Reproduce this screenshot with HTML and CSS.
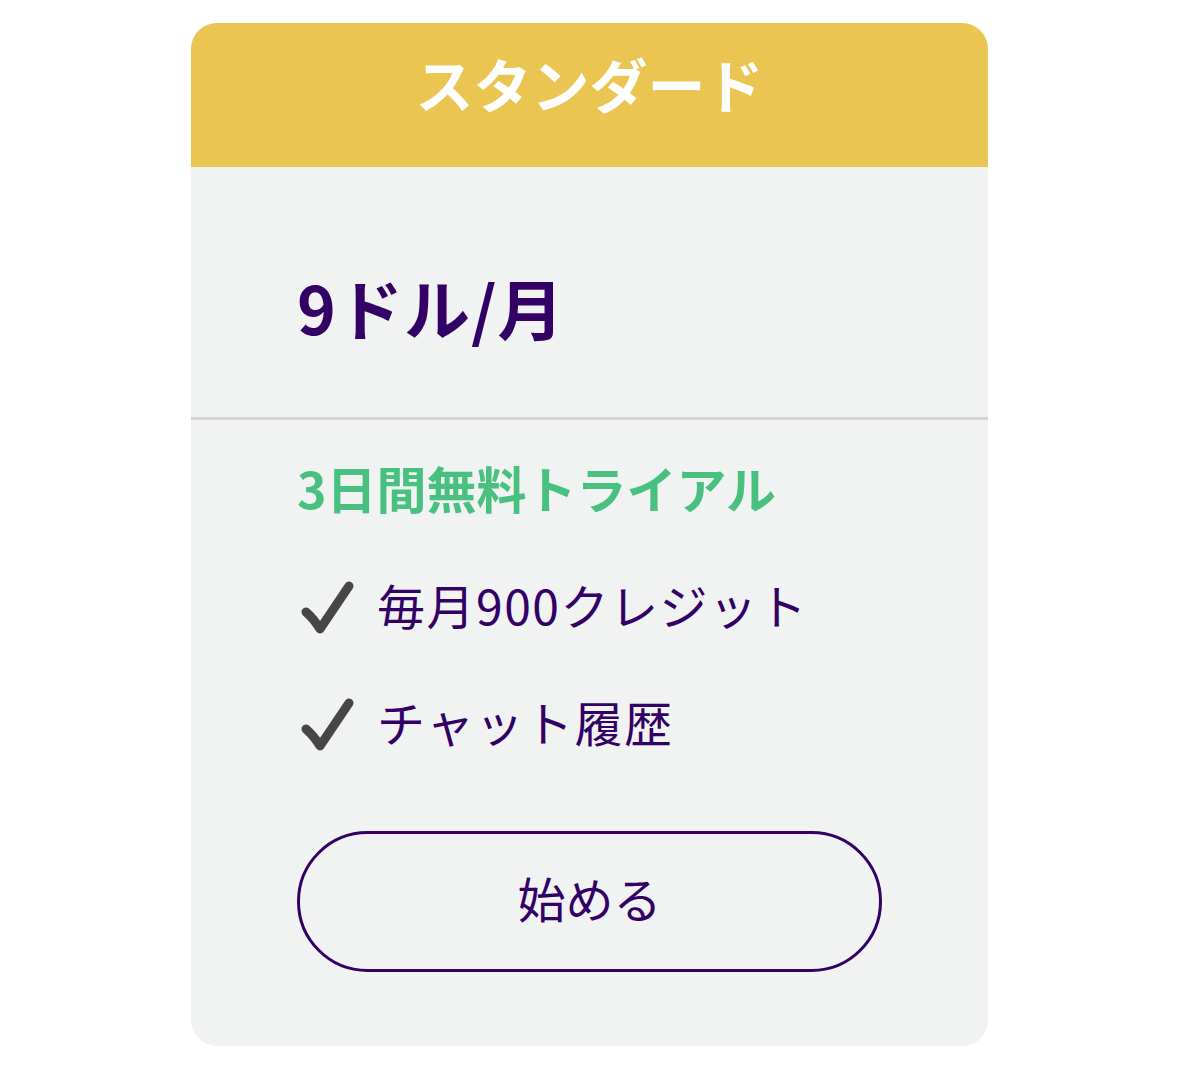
FILE: index.html
```html
<!DOCTYPE html>
<html lang="ja">
<head>
<meta charset="utf-8">
<title>スタンダード</title>
<link rel="stylesheet" href="styles.css">
</head>
<body>
<div class="card">
  <div class="card-header">スタンダード</div>
  <div class="price-block">
    <div class="price">9ドル/月</div>
  </div>
  <div class="divider"></div>
  <div class="details">
    <div class="trial">3日間無料トライアル</div>
    <ul class="features">
      <li class="feature">
        <svg class="check" viewBox="0 0 56 56" aria-hidden="true"><path d="M7 33 Q15 40 21 50 L50 7" fill="none" stroke="#464646" stroke-width="9" stroke-linecap="round" stroke-linejoin="round"/></svg>
        <span>毎月900クレジット</span>
      </li>
      <li class="feature">
        <svg class="check" viewBox="0 0 56 56" aria-hidden="true"><path d="M7 33 Q15 40 21 50 L50 7" fill="none" stroke="#464646" stroke-width="9" stroke-linecap="round" stroke-linejoin="round"/></svg>
        <span>チャット履歴</span>
      </li>
    </ul>
    <button class="start-btn">始める</button>
  </div>
</div>
</body>
</html>
```

FILE: styles.css
```css
* { box-sizing: border-box; }
html, body { margin: 0; padding: 0; background: #ffffff; }
body {
  font-family: "Noto Sans CJK JP", "Noto Sans", sans-serif;
  color: #330066;
}
.card {
  width: 797px;
  margin: 23px auto 0;
  background: #f1f2f2;
  border-radius: 26px;
  overflow: hidden;
}
.card-header {
  background: #eac552;
  color: #ffffff;
  height: 144px;
  font-size: 58px;
  font-weight: 700;
  text-align: center;
  line-height: 120px;
}
.price-block {
  padding: 91px 106px 63px;
}
.price {
  font-size: 66px;
  font-weight: 700;
  line-height: 96px;
  letter-spacing: 1px;
}
.divider {
  height: 3px;
  background: #d4d4d8;
}
.details {
  padding: 32px 106px 74px;
}
.trial {
  color: #48c080;
  font-size: 50px;
  font-weight: 700;
  line-height: 70px;
}
.features {
  list-style: none;
  margin: 47px 0 0;
  padding: 0;
  display: flex;
  flex-direction: column;
  gap: 47px;
}
.feature {
  display: flex;
  align-items: center;
  gap: 22px;
  font-size: 48px;
  line-height: 70px;
  letter-spacing: 1.5px;
}
.check {
  width: 56px;
  height: 56px;
  flex: none;
  margin-left: 2px;
  margin-top: 6px;
}
.start-btn {
  display: block;
  margin-top: 75px;
  width: 585px;
  height: 141px;
  border: 3px solid #330066;
  border-radius: 71px;
  background: transparent;
  color: #330066;
  font-family: "Noto Sans CJK JP", "Noto Sans", sans-serif;
  font-size: 48px;
  padding: 0 0 10px;
}
```
